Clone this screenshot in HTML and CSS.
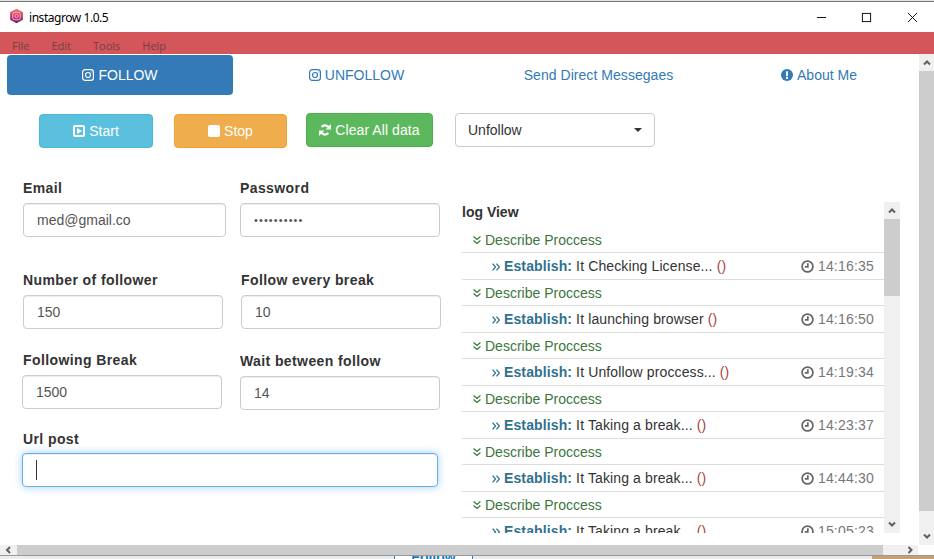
FILE: index.html
```html
<!DOCTYPE html>
<html lang="en">
<head>
<meta charset="utf-8">
<title>instagrow 1.0.5</title>
<link rel="stylesheet" href="styles.css">
</head>
<body>
<div class="edge"></div>
<header class="titlebar">
  <svg class="appicon" viewBox="0 0 16 16"><defs><linearGradient id="g" x1="0" y1="0" x2="0" y2="1"><stop offset="0" stop-color="#e8854e"/><stop offset="0.5" stop-color="#d62f6a"/><stop offset="1" stop-color="#4a2a6e"/></linearGradient></defs><path d="M8 .3 14.8 4v8L8 15.7 1.2 12V4z" fill="url(#g)"/><rect x="4" y="4" width="8" height="8" rx="2.2" fill="none" stroke="#fbd" stroke-width="1"/><circle cx="8" cy="8" r="1.8" fill="none" stroke="#fbd" stroke-width="1"/></svg>
  <span class="apptitle">instagrow 1.0.5</span>
  <div class="winctl">
    <svg viewBox="0 0 12 12"><path d="M1 6h10" stroke="#000" fill="none"/></svg>
    <svg viewBox="0 0 12 12"><rect x="1.5" y="1.5" width="9" height="9" stroke="#000" fill="none"/></svg>
    <svg viewBox="0 0 12 12"><path d="M1 1l10 10M11 1 1 11" stroke="#000" fill="none"/></svg>
  </div>
</header>
<nav class="menubar"><span>File</span><span>Edit</span><span>Tools</span><span>Help</span></nav>
<div class="viewport">
  <main class="page">
    <ul class="tabs">
      <li class="tab active"><svg class="ig" viewBox="0 0 12 12"><rect x=".6" y=".6" width="10.8" height="10.8" rx="2.6"/><circle cx="6" cy="6" r="2.5"/><circle cx="9.1" cy="2.9" r=".5" class="dot"/></svg> FOLLOW</li>
      <li class="tab"><svg class="ig" viewBox="0 0 12 12"><rect x=".6" y=".6" width="10.8" height="10.8" rx="2.6"/><circle cx="6" cy="6" r="2.5"/><circle cx="9.1" cy="2.9" r=".5" class="dot"/></svg> UNFOLLOW</li>
      <li class="tab">Send Direct Messegaes</li>
      <li class="tab"><svg class="info" viewBox="0 0 12 12"><circle cx="6" cy="6" r="6"/><rect x="5" y="2.2" width="2" height="5" rx=".5" class="mark"/><rect x="5" y="8" width="2" height="2" class="mark"/></svg> About Me</li>
    </ul>
    <div class="actions">
      <button class="btn info-btn"><svg class="bi" viewBox="0 0 12 12"><rect width="12" height="12" rx="2"/><rect x="2" y="2" width="8" height="8" class="cut"/><path d="M4 3 9 6 4 9z"/></svg> Start</button>
      <button class="btn warn-btn"><svg class="bi" viewBox="0 0 12 12"><rect width="12" height="12" rx="2"/></svg> Stop</button>
      <button class="btn ok-btn"><svg class="bi" viewBox="0 0 12 12"><path d="M10.3 4.6A4.6 4.6 0 0 0 2.6 2.9" fill="none" stroke="#fff" stroke-width="2.2"/><path d="M12 0v5.4H6.6z"/><path d="M1.7 7.4a4.6 4.6 0 0 0 7.7 1.7" fill="none" stroke="#fff" stroke-width="2.2"/><path d="M0 12V6.6h5.4z"/></svg> Clear All data</button>
      <div class="select">Unfollow<i class="caret"></i></div>
    </div>
    <div class="columns">
      <form class="form">
        <div class="row">
          <label class="field f-email"><b>Email</b><input value="med@gmail.co"></label>
          <label class="field f-pass"><b>Password</b><input type="password" value="0123456789"></label>
        </div>
        <div class="row r2">
          <label class="field f-num"><b>Number of follower</b><input value="150"></label>
          <label class="field f-every"><b>Follow every break</b><input value="10"></label>
        </div>
        <div class="row r3">
          <label class="field f-break"><b>Following Break</b><input value="1500"></label>
          <label class="field f-wait"><b>Wait between follow</b><input value="14"></label>
        </div>
        <label class="field f-url"><b>Url post</b><span class="focus"><i class="cursor"></i></span></label>
      </form>
      <section class="log">
        <div class="logscroll">
          <h2>log View</h2>
          <div class="entry"><div class="group"><svg class="dd" viewBox="0.5 0.5 7 7"><path d="M1 1l3 2.6L7 1M1 4.4 4 7l3-2.6"/></svg>Describe Proccess</div><div class="item"><span class="msg"><svg class="dr" viewBox="0.5 0.5 7 7"><path d="M1 1l2.6 3L1 7M4.4 1 7 4 4.4 7"/></svg><strong>Establish:</strong> It Checking License... <span class="paren">()</span></span><span class="time"><svg class="clock" viewBox="0 0 12 12"><circle cx="6" cy="6" r="5"/><path d="M6.3 3v3.3H3.5"/></svg> 14:16:35</span></div></div>
          <div class="entry"><div class="group"><svg class="dd" viewBox="0.5 0.5 7 7"><path d="M1 1l3 2.6L7 1M1 4.4 4 7l3-2.6"/></svg>Describe Proccess</div><div class="item"><span class="msg"><svg class="dr" viewBox="0.5 0.5 7 7"><path d="M1 1l2.6 3L1 7M4.4 1 7 4 4.4 7"/></svg><strong>Establish:</strong> It launching browser <span class="paren">()</span></span><span class="time"><svg class="clock" viewBox="0 0 12 12"><circle cx="6" cy="6" r="5"/><path d="M6.3 3v3.3H3.5"/></svg> 14:16:50</span></div></div>
          <div class="entry"><div class="group"><svg class="dd" viewBox="0.5 0.5 7 7"><path d="M1 1l3 2.6L7 1M1 4.4 4 7l3-2.6"/></svg>Describe Proccess</div><div class="item"><span class="msg"><svg class="dr" viewBox="0.5 0.5 7 7"><path d="M1 1l2.6 3L1 7M4.4 1 7 4 4.4 7"/></svg><strong>Establish:</strong> It Unfollow proccess... <span class="paren">()</span></span><span class="time"><svg class="clock" viewBox="0 0 12 12"><circle cx="6" cy="6" r="5"/><path d="M6.3 3v3.3H3.5"/></svg> 14:19:34</span></div></div>
          <div class="entry"><div class="group"><svg class="dd" viewBox="0.5 0.5 7 7"><path d="M1 1l3 2.6L7 1M1 4.4 4 7l3-2.6"/></svg>Describe Proccess</div><div class="item"><span class="msg"><svg class="dr" viewBox="0.5 0.5 7 7"><path d="M1 1l2.6 3L1 7M4.4 1 7 4 4.4 7"/></svg><strong>Establish:</strong> It Taking a break... <span class="paren">()</span></span><span class="time"><svg class="clock" viewBox="0 0 12 12"><circle cx="6" cy="6" r="5"/><path d="M6.3 3v3.3H3.5"/></svg> 14:23:37</span></div></div>
          <div class="entry"><div class="group"><svg class="dd" viewBox="0.5 0.5 7 7"><path d="M1 1l3 2.6L7 1M1 4.4 4 7l3-2.6"/></svg>Describe Proccess</div><div class="item"><span class="msg"><svg class="dr" viewBox="0.5 0.5 7 7"><path d="M1 1l2.6 3L1 7M4.4 1 7 4 4.4 7"/></svg><strong>Establish:</strong> It Taking a break... <span class="paren">()</span></span><span class="time"><svg class="clock" viewBox="0 0 12 12"><circle cx="6" cy="6" r="5"/><path d="M6.3 3v3.3H3.5"/></svg> 14:44:30</span></div></div>
          <div class="entry"><div class="group"><svg class="dd" viewBox="0.5 0.5 7 7"><path d="M1 1l3 2.6L7 1M1 4.4 4 7l3-2.6"/></svg>Describe Proccess</div><div class="item"><span class="msg"><svg class="dr" viewBox="0.5 0.5 7 7"><path d="M1 1l2.6 3L1 7M4.4 1 7 4 4.4 7"/></svg><strong>Establish:</strong> It Taking a break... <span class="paren">()</span></span><span class="time"><svg class="clock" viewBox="0 0 12 12"><circle cx="6" cy="6" r="5"/><path d="M6.3 3v3.3H3.5"/></svg> 15:05:23</span></div></div>
        </div>
        <div class="vbar small"><svg class="arr" viewBox="0 0 8 6"><path d="M1 4.5 4 1.5l3 3"/></svg><div class="thumb"></div><svg class="arr end" viewBox="0 0 8 6"><path d="M1 1.5l3 3 3-3"/></svg></div>
      </section>
    </div>
  </main>
  <div class="vbar big"><svg class="arr" viewBox="0 0 8 6"><path d="M1 4.5 4 1.5l3 3"/></svg><div class="thumb"></div><svg class="arr end" viewBox="0 0 8 6"><path d="M1 1.5l3 3 3-3"/></svg></div>
</div>
<div class="hbar"><svg class="harr" viewBox="0 0 6 8"><path d="M4.5 1 1.5 4l3 3"/></svg><div class="hthumb"></div><div class="htrack"><svg class="harr" viewBox="0 0 6 8"><path d="M1.5 1l3 3-3 3"/></svg></div><div class="corner"></div></div>
<div class="under"><span class="under-tab">Follow</span><span class="under-tan"></span></div>
</body>
</html>
```

FILE: styles.css
```css
* { box-sizing: border-box; }
html, body { margin: 0; height: 100%; }
body {
  width: 934px;
  height: 559px;
  overflow: hidden;
  display: flex;
  flex-direction: column;
  font-family: "Liberation Sans", Arial, sans-serif;
  font-size: 14px;
  color: #333;
  background: #fff;
}
.edge { height: 2px; background: #e4e4e4; border-bottom: 1px solid #777; flex: none; }
.titlebar { height: 30px; flex: none; display: flex; align-items: center; padding-left: 9px; background: #fff; }
.appicon { width: 15px; height: 16px; margin-top: -2px; }
.apptitle { font-family: "Noto Sans", "Liberation Sans", sans-serif; font-size: 12px; letter-spacing: -.45px; color: #000; margin-left: 5px; }
.winctl { margin-left: auto; display: flex; }
.winctl svg { width: 11px; height: 11px; margin-left: 35px; }
.winctl svg:first-child { margin-right: -1px; }
.winctl svg:last-child { margin-right: 16px; }
.menubar { height: 22px; flex: none; background: #d4555a; display: flex; padding: 6px 0 0 12px; font-family: "Open Sans", "Liberation Sans", sans-serif; font-size: 11px; line-height: 16px; color: #6f4246; overflow: hidden; }
.menubar span { margin-right: 22px; }
.viewport { height: 491px; flex: none; display: flex; }
.page { width: 919px; flex: none; overflow: hidden; }

.tabs { list-style: none; margin: 1px 0 0; padding: 0 0 0 7px; display: flex; height: 40px; }
.tab { width: 226px; height: 40px; display: flex; align-items: center; justify-content: center; gap: 4px; color: #337ab7; border-radius: 4px; }
.tab.active { background: #337ab7; color: #fff; }
.tab:nth-child(2) { width: 247px; }
.tab:nth-child(3) { width: 237px; letter-spacing: .05px; }
.tab:nth-child(4) { width: 200px; margin-left: 2px; }
.ig { width: 12px; height: 12px; fill: none; stroke: currentColor; stroke-width: 1.2; }
.ig .dot { fill: currentColor; stroke: none; }
.info { width: 12px; height: 12px; fill: #337ab7; }
.info .mark { fill: #fff; }

.actions { display: flex; padding: 18px 0 0 39px; align-items: flex-start; }
.btn { height: 34px; border: 1px solid; border-radius: 4px; color: #fff; font: 14px "Liberation Sans", Arial, sans-serif; display: flex; align-items: center; justify-content: center; gap: 4px; padding: 0; margin-top: 1px; }
.bi { width: 12px; height: 12px; fill: #fff; flex: none; }
.bi .cut { fill: #5bc0de; }
.info-btn { width: 114px; background: #5bc0de; border-color: #46b8da; }
.warn-btn { width: 113px; background: #f0ad4e; border-color: #eea236; margin-left: 21px; }
.ok-btn { width: 127px; background: #5cb85c; border-color: #4cae4c; margin-left: 19px; margin-top: 0; letter-spacing: .08px; }
.select { width: 200px; height: 34px; border: 1px solid #ccc; border-radius: 4px; margin-left: 22px; padding: 0 12px; line-height: 32px; color: #333; display: flex; justify-content: space-between; align-items: center; }
.caret { border-top: 4px solid #333; border-left: 4px solid transparent; border-right: 4px solid transparent; }

.columns { display: flex; }
.form { width: 462px; flex: none; padding: 30px 0 0 23px; }
.row { display: flex; }
.field { display: block; }
.field b { display: block; line-height: 20px; font-weight: 700; margin-bottom: 5px; color: #333; letter-spacing: .4px; white-space: nowrap; }
.field input, .focus { display: block; height: 34px; border: 1px solid #ccc; border-radius: 4px; padding: 6px 12px 6px 13px; font: 14px/20px "Liberation Sans", Arial, sans-serif; color: #555; box-shadow: inset 0 1px 1px rgba(0,0,0,.075); width: 100%; outline: none; background: #fff; }
.f-email { width: 203px; }
.f-pass { width: 200px; margin-left: 14px; }
.f-pass input { font-size: 11px; letter-spacing: 1.1px; }
.r2 { margin-top: 33px; }
.f-num { width: 200px; }
.f-every { width: 200px; margin-left: 18px; }
.r3 { margin-top: 21px; margin-left: -1px; }
.f-break { width: 200px; }
.f-wait { width: 200px; margin-left: 18px; margin-top: 1px; }
.f-url { width: 416px; margin: 19px 0 0 -1px; }
.f-url b { margin-bottom: 4px; margin-left: 1px; }
.f-break b { margin-left: 1px; }
.focus { border-color: #66afe9; box-shadow: inset 0 1px 1px rgba(0,0,0,.075), 0 0 8px rgba(102,175,233,.6); }
.cursor { display: block; width: 1px; height: 20px; background: #333; }

.log { flex: none; width: 438px; height: 331px; margin-top: 54px; display: flex; }
.logscroll { width: 422px; height: 331px; overflow: hidden; }
.log h2 { font-size: 14px; line-height: 20px; margin: 0; height: 25px; color: #333; }
.group { height: 25px; line-height: 26px; padding-left: 11px; color: #3c763d; display: flex; align-items: center; }
.dd { width: 8px; height: 8px; margin-right: 4px; fill: none; stroke: #3c763d; stroke-width: 1.1; flex: none; }
.item { height: 28px; border-top: 1px solid #ddd; border-bottom: 1px solid #ddd; display: flex; justify-content: space-between; align-items: center; padding: 0 10px 0 30px; color: #333; }
.msg { letter-spacing: .12px; }
.dr { width: 8px; height: 8px; margin-right: 4px; fill: none; stroke: #31708f; stroke-width: 1.1; }
.msg strong { color: #31708f; }
.paren { color: #a94442; }
.time { color: #777; display: flex; align-items: center; gap: 4px; letter-spacing: .2px; }
.clock { width: 13px; height: 13px; fill: none; stroke: #666; stroke-width: 1.6; }

.vbar { background: #f0f0f0; display: flex; flex-direction: column; align-items: center; flex: none; }
.vbar.small { width: 16px; height: 331px; }
.vbar.big { width: 15px; height: 491px; }
.vbar .thumb { background: #cdcdcd; width: 100%; }
.small .thumb { height: 77px; margin-top: 5px; }
.big .thumb { height: 440px; margin-top: 5px; }
.arr { width: 8px; height: 6px; margin-top: 6px; fill: none; stroke: #606060; stroke-width: 2; flex: none; }
.arr.end { margin-top: auto; margin-bottom: 6px; }

.hbar { height: 10px; flex: none; display: flex; background: #f0f0f0; }
.hbar > .harr { width: 17px; height: 8px; margin-top: 1px; }
.harr { fill: none; stroke: #606060; stroke-width: 2; }
.hthumb { width: 866px; background: #cdcdcd; }
.htrack { width: 35px; background: #f0f0f0; display: flex; justify-content: flex-end; padding-right: 5px; }
.htrack .harr { width: 6px; height: 8px; margin-top: 1px; }
.corner { width: 16px; background: #fff; }
.under { flex: none; height: 4px; background: #ececec; border-top: 1px solid #999; display: flex; overflow: hidden; padding-left: 394px; }
.under-tab { width: 79px; flex: none; text-align: center; border-left: 1px solid #337ab7; border-right: 1px solid #337ab7; background: #fff; color: #1a7bc0; font-weight: 700; font-size: 14px; line-height: 3px; }
.under-tan { flex: none; width: 62px; margin-left: 399px; background: #c8a070; }
```
